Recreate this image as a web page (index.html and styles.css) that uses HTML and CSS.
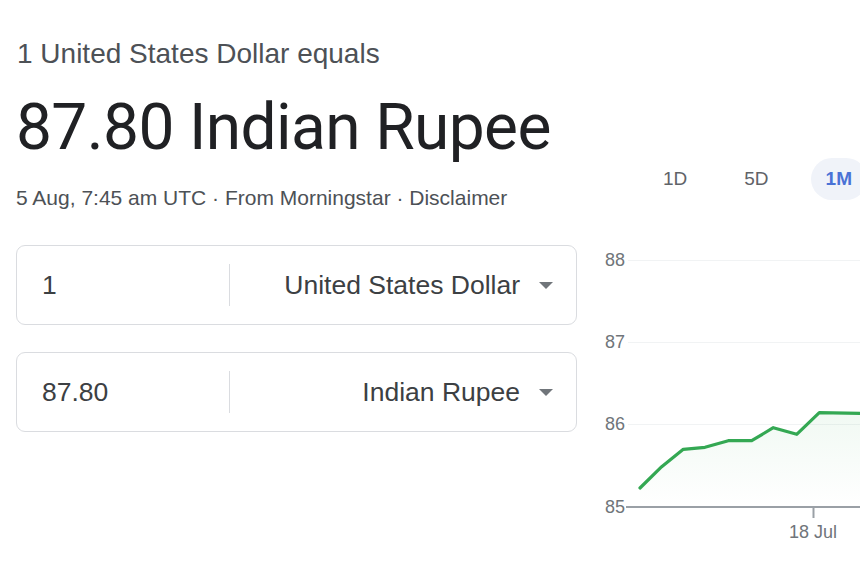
FILE: index.html
```html
<!DOCTYPE html>
<html>
<head>
<meta charset="utf-8">
<link rel="stylesheet" href="styles.css">
</head>
<body>
<div class="page">
  <div class="left">
    <div class="title">1 United States Dollar equals</div>
    <div class="result">87.80 Indian Rupee</div>
    <div class="meta">5 Aug, 7:45 am UTC · From Morningstar · Disclaimer</div>
    <div class="converter">
      <div class="box">
        <div class="amount">1</div>
        <div class="divider"></div>
        <div class="currency">United States Dollar<span class="arrow"></span></div>
      </div>
      <div class="box">
        <div class="amount">87.80</div>
        <div class="divider"></div>
        <div class="currency">Indian Rupee<span class="arrow"></span></div>
      </div>
    </div>
  </div>
  <div class="right">
    <div class="tabs">
      <div class="tab">1D</div>
      <div class="tab">5D</div>
      <div class="tab active">1M</div>
    </div>
    <svg class="chart" width="270" height="320" viewBox="0 0 270 320">
      <defs>
        <linearGradient id="fill" x1="0" y1="0" x2="0" y2="1">
          <stop offset="0" stop-color="#34a853" stop-opacity="0.07"/>
          <stop offset="1" stop-color="#34a853" stop-opacity="0"/>
        </linearGradient>
      </defs>
      <g class="grid">
        <line x1="38" y1="20.5" x2="270" y2="20.5"/>
        <line x1="38" y1="102.5" x2="270" y2="102.5"/>
        <line x1="38" y1="184.5" x2="270" y2="184.5"/>
      </g>
      <g class="ylabels">
        <text x="15" y="26">88</text>
        <text x="15" y="108">87</text>
        <text x="15" y="190">86</text>
        <text x="15" y="273">85</text>
      </g>
      <path class="area" d="M50 248 L71.7 226.7 L93.3 209.3 L115 207.3 L138.3 200.7 L161.7 200.7 L183.3 187.7 L206.7 194.3 L229.3 172.7 L270 173.3 L270 267 L50 267 Z"/>
      <polyline class="line" points="50,248 71.7,226.7 93.3,209.3 115,207.3 138.3,200.7 161.7,200.7 183.3,187.7 206.7,194.3 229.3,172.7 270,173.3"/>
      <line class="axis" x1="36" y1="267" x2="270" y2="267"/>
      <line class="tick" x1="223.5" y1="267" x2="223.5" y2="278"/>
      <text class="xlabel" x="223" y="298" text-anchor="middle">18 Jul</text>
    </svg>
  </div>
</div>
</body>
</html>
```

FILE: styles.css
```css
html, body {
  margin: 0;
  padding: 0;
  background: #ffffff;
}
body {
  font-family: "Liberation Sans", Arial, sans-serif;
  color: #202124;
  overflow: hidden;
}
.page {
  display: grid;
  grid-template-columns: 561px 1fr;
  column-gap: 13px;
  padding-left: 16px;
  width: 860px;
  height: 573px;
  box-sizing: border-box;
  overflow: hidden;
}
.left {
  padding-top: 38px;
}
.title {
  font-size: 28px;
  line-height: 32px;
  color: #4d5156;
  padding-left: 1px;
}
.result {
  font-family: Roboto, "Liberation Sans", sans-serif;
  font-size: 64px;
  line-height: 72px;
  letter-spacing: -0.6px;
  color: #202124;
  margin-top: 22px;
}
.meta {
  font-size: 21px;
  line-height: 26px;
  color: #4d5156;
  margin-top: 21px;
}
.converter {
  margin-top: 34px;
  display: flex;
  flex-direction: column;
  gap: 27px;
}
.box {
  height: 80px;
  border: 1px solid #dadce0;
  border-radius: 9px;
  box-sizing: border-box;
  display: flex;
  align-items: center;
}
.amount {
  width: 187px;
  padding-left: 25px;
  font-size: 26.5px;
  color: #3c4043;
}
.divider {
  width: 1px;
  height: 42px;
  background: #dadce0;
}
.currency {
  flex: 1;
  display: flex;
  justify-content: flex-end;
  align-items: center;
  font-size: 26.5px;
  color: #3c4043;
  padding-right: 23px;
}
.arrow {
  width: 0;
  height: 0;
  border-left: 7px solid transparent;
  border-right: 7px solid transparent;
  border-top: 7px solid #70757a;
  margin-left: 19px;
}
.right {
  padding-top: 158px;
  min-width: 0;
}
.tabs {
  display: flex;
  gap: 27px;
  padding-left: 58px;
  height: 42px;
}
.tab {
  height: 42px;
  line-height: 42px;
  padding: 0 15px;
  border-radius: 21px;
  font-size: 19px;
  color: #5f6368;
  white-space: nowrap;
}
.tab.active {
  background: #f0f3f9;
  color: #4a72d6;
  font-weight: bold;
}
.chart {
  display: block;
  margin-top: 40px;
  overflow: visible;
}
.grid line {
  stroke: #f1f3f4;
  stroke-width: 1;
}
.ylabels text, .xlabel {
  font-family: "Liberation Sans", Arial, sans-serif;
  font-size: 18px;
  fill: #70757a;
}
.axis {
  stroke: #9aa0a6;
  stroke-width: 2;
}
.tick {
  stroke: #9aa0a6;
  stroke-width: 2;
}
.line {
  fill: none;
  stroke: #34a853;
  stroke-width: 3.2;
  stroke-linejoin: round;
  stroke-linecap: round;
}
.area {
  fill: url(#fill);
}
```
